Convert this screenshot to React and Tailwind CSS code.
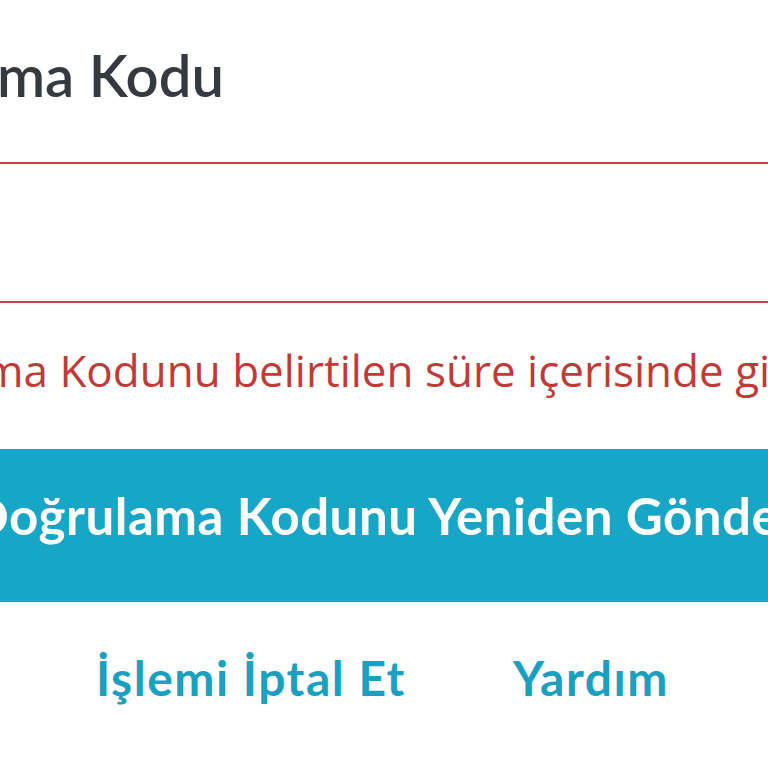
import React from "react";

const font = { fontFamily: "Lato, 'Open Sans', sans-serif" };

export default function App() {
  return (
    <div
      className="w-[768px] h-[768px] overflow-hidden bg-white"
      style={font}
    >
      {/* Label */}
      <div className="h-[162px] pt-[46px]">
        <div className="flex w-[224px] justify-end">
          <span className="whitespace-nowrap text-[58px] leading-none font-semibold text-[#343a3f]">
            Doğrulama Kodu
          </span>
        </div>
      </div>

      {/* Code input */}
      <div className="h-[141px] border-y-2 border-[#bf4448]">
        <input className="w-full h-full outline-none bg-transparent" />
      </div>

      {/* Error message */}
      <div className="h-[146px] pt-[45px]">
        <p className="whitespace-nowrap -ml-[180px] font-['Open_Sans',sans-serif] text-[44px] leading-none text-[#c23a37]">
          Doğrulama Kodunu belirtilen süre içerisinde giriniz.
        </p>
      </div>

      {/* Resend button */}
      <button className="flex h-[153px] w-full items-center bg-[#17a6c6] pb-[20px]">
        <span className="whitespace-nowrap -ml-[30px] text-[51px] leading-none tracking-[0.5px] font-bold text-white">
          Doğrulama Kodunu Yeniden Gönder
        </span>
      </button>

      {/* Links */}
      <div className="flex gap-[107px] pl-[96px] pt-[52px]">
        <a className="text-[48px] leading-none tracking-[1.5px] font-bold text-[#1ba0c1]">
          İşlemi İptal Et
        </a>
        <a className="text-[48px] leading-none tracking-[1.5px] font-bold text-[#1ba0c1]">
          Yardım
        </a>
      </div>
    </div>
  );
}
